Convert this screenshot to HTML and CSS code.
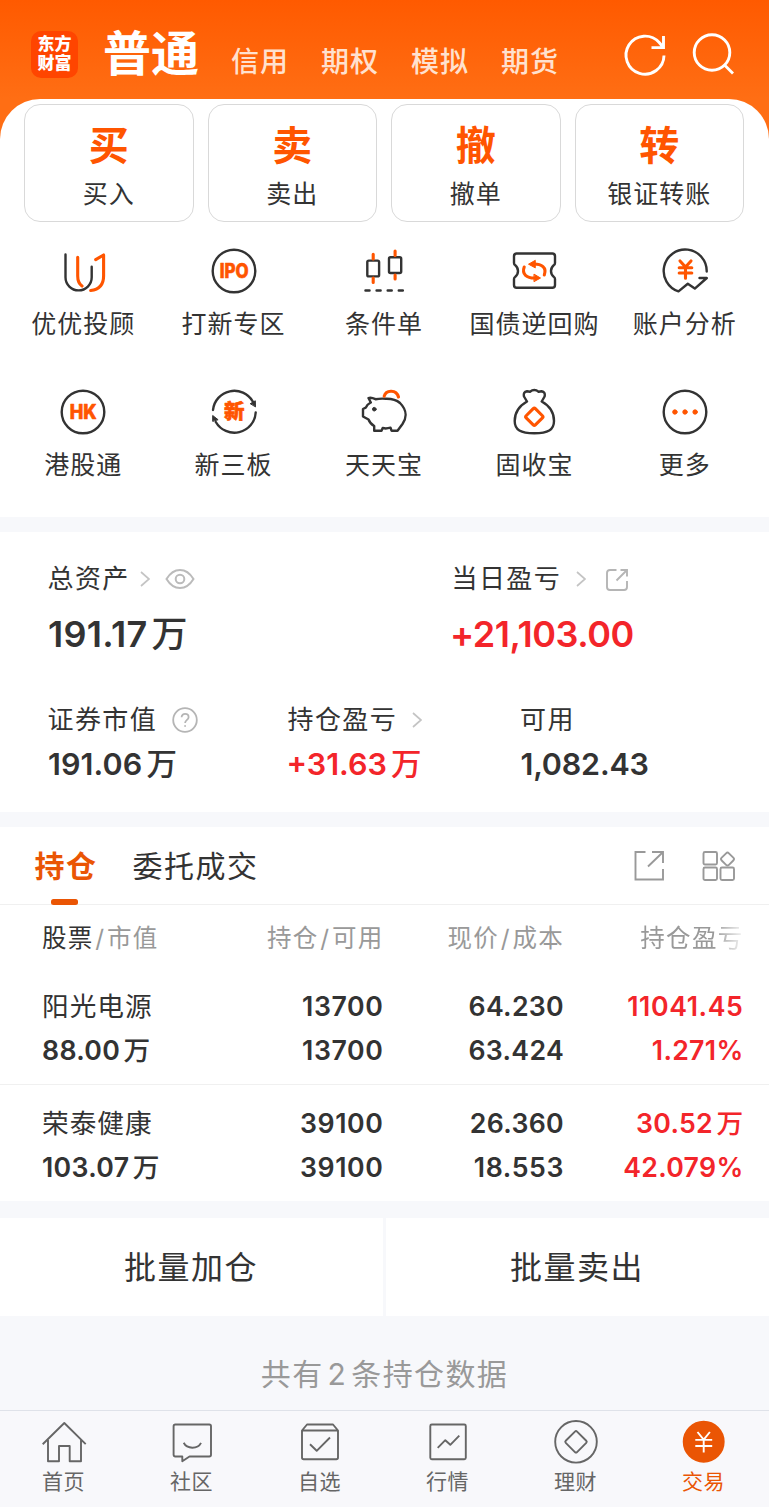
FILE: index.html
```html
<!DOCTYPE html>
<html lang="zh-CN">
<head>
<meta charset="utf-8">
<title>交易</title>
<link rel="stylesheet" href="styles.css">
</head>
<body>
<div class="app">
  <header class="top">
    <div class="logo"><span>东方</span><span>财富</span></div>
    <nav class="modes">
      <span class="mode mode-on">普通</span>
      <span class="mode">信用</span>
      <span class="mode">期权</span>
      <span class="mode">模拟</span>
      <span class="mode">期货</span>
    </nav>
    <svg class="top-icon" width="48" height="48" viewBox="0 0 48 48"><path d="M43 25.500A19 19 0 1 1 38.200 12.500L42 17M42.500 6V17.600H30.500"/></svg>
    <svg class="top-icon" width="48" height="48" viewBox="0 0 48 48"><circle cx="22" cy="22.500" r="17.800"/><path d="M34.500 35L43 43.500"/></svg>
  </header>

  <main class="sheet">
    <section class="cards">
      <div class="card"><b>买</b><span>买入</span></div>
      <div class="card"><b>卖</b><span>卖出</span></div>
      <div class="card"><b>撤</b><span>撤单</span></div>
      <div class="card"><b>转</b><span>银证转账</span></div>
    </section>

    <section class="tools">
      <div class="tool">
        <svg class="ico" viewBox="0 0 48 48"><path d="M6.500 7.500V30.300a13.100 13.100 0 0 0 26.200 0V19.700"/><path class="o3" d="M18.700 10.200V29Q18.700 36 23 39M36.700 12.700L44.600 8V29Q44.600 42 31.700 43.500"/></svg>
        <span>优优投顾</span>
      </div>
      <div class="tool">
        <svg class="ico" viewBox="0 0 48 48"><circle cx="24" cy="24" r="21.300"/><text x="24.200" y="31" font-size="19.500" textLength="29" lengthAdjust="spacingAndGlyphs">IPO</text></svg>
        <span>打新专区</span>
      </div>
      <div class="tool">
        <svg class="ico" viewBox="0 0 48 48"><rect x="7.300" y="13.600" width="11.800" height="15.800" rx="1.500"/><rect x="29" y="10.200" width="12.200" height="15.800" rx="1.500"/><path class="o3" d="M13.200 7.300V12M13.200 31V35.500M35.100 4V8.500M35.100 28V32"/><path class="dash" d="M5.500 43.500H44"/></svg>
        <span>条件单</span>
      </div>
      <div class="tool">
        <svg class="ico" viewBox="0 0 48 48"><path d="M6.300 6.500H42.300Q45 6.500 45 9.200V16Q45 17.500 43.700 18.300Q41 20.500 41 24T43.700 29.700Q45 30.500 45 32V38Q45 40.800 42.300 40.800H6.700Q4 40.800 4 38V32Q4 30.500 5.300 29.700Q8 27.500 8 24T5.300 18.300Q4 17.500 4 16V9.200Q4 6.500 6.700 6.500"/><path class="o3" d="M14.200 20C11.500 27.500 17 31 24.500 31M34.300 28C37 20.500 31.500 17 24 17"/><path class="of" d="M24.300 27.300L30.500 31L24.300 34.500ZM25 13.500L18.500 17.200L25 20.700Z"/></svg>
        <span>国债逆回购</span>
      </div>
      <div class="tool">
        <svg class="ico" viewBox="0 0 48 48"><path d="M45.700 24.500A21.500 21.500 0 1 0 17.500 44.400L26.800 36.800L33.800 41.600L45.800 31H38.500"/><path class="o3" d="M19 14L24.500 20L30 14M24.500 20V31.300M18.200 20.800H30.800M18.200 26H30.800"/></svg>
        <span>账户分析</span>
      </div>
      <div class="tool">
        <svg class="ico" viewBox="0 0 48 48"><circle cx="24" cy="24" r="21.300"/><text x="24.200" y="31" font-size="19.500" textLength="27" lengthAdjust="spacingAndGlyphs">HK</text></svg>
        <span>港股通</span>
      </div>
      <div class="tool">
        <svg class="ico" viewBox="0 0 48 48"><path d="M3 22A21.400 21.400 0 0 1 42.800 13.500M45.700 24.500A21.400 21.400 0 0 1 5.800 34"/><path class="df" d="M40.500 15.500L45.300 12.800L45.500 18.500ZM2.700 33V27.500L7.800 31.500Z"/><text x="24.300" y="31" font-size="20.500">新</text></svg>
        <span>新三板</span>
      </div>
      <div class="tool">
        <svg class="ico" viewBox="0 0 48 48"><path d="M26 10.700Q35 10.500 40 15C48 23 46 31 42.500 36L37.500 42.700H31.500L30.500 39.700Q26 41 22.700 40L21.500 42.700H14.200V38Q10 35.500 8.500 31.500L3 28.500V21L5.700 19.700Q7.500 16 10.800 14.500L8.500 10Q11 9 15.500 11.200Q20 10.300 26 10.700"/><circle class="df" cx="14.300" cy="21.200" r="1.800"/><path class="o3" d="M24.200 8.200C26 1.500 36.500 1.500 38.500 9"/></svg>
        <span>天天宝</span>
      </div>
      <div class="tool">
        <svg class="ico" viewBox="0 0 48 48"><path d="M17 13.500L14 8.500Q13 4 17 3.200L20 3.700Q24.300 .5 28.600 3.700L31.600 3.200Q35.600 4 34.600 8.500L31.700 13.500C40 18 44 25 44 33C44 42 38 45.200 24.300 45.200S4.700 42 4.700 33C4.700 25 9 18 17 13.500"/><rect class="o3" x="17.800" y="22.300" width="13" height="13" rx="1.500" transform="rotate(45 24.300 28.800)"/></svg>
        <span>固收宝</span>
      </div>
      <div class="tool">
        <svg class="ico" viewBox="0 0 48 48"><circle cx="24" cy="24" r="21.300"/><g class="of"><circle cx="13.900" cy="24" r="2.200"/><circle cx="24" cy="24" r="2.200"/><circle cx="34.100" cy="24" r="2.200"/></g></svg>
        <span>更多</span>
      </div>
    </section>

    <section class="assets">
      <div class="asset-row asset-main">
        <div class="asset">
          <div class="label"><span>总资产</span><svg class="chev" viewBox="0 0 10 16"><path d="M1 1L9 8L1 15"/></svg><svg class="eye" viewBox="0 0 30 22"><path d="M1.500 11Q7 2 15 2T28.500 11Q23 20 15 20T1.500 11Z"/><circle cx="15" cy="11" r="4.300"/></svg></div>
          <div class="value wide">191.17<i>万</i></div>
        </div>
        <div class="asset">
          <div class="label"><span>当日盈亏</span><svg class="chev chev-wide" viewBox="0 0 10 16"><path d="M1 1L9 8L1 15"/></svg><svg class="share-s" viewBox="0 0 24 24"><path d="M11.500 2H5Q2 2 2 5V19Q2 22 5 22H19Q22 22 22 19V13M11.500 12.500L21.500 2.500M15.500 2H22V8.500"/></svg></div>
          <div class="value red signed">+21,103.00</div>
        </div>
      </div>
      <div class="asset-row asset-sub">
        <div class="asset">
          <div class="label"><span>证券市值</span><svg class="help" viewBox="0 0 26 26"><circle cx="13" cy="13" r="11.800"/><path d="M9.600 10.300C9.600 5.700 16.600 5.900 16.600 10.200C16.600 12.800 13.100 13 13.100 16M13.100 18.200V19.800"/></svg></div>
          <div class="value">191.06<i>万</i></div>
        </div>
        <div class="asset">
          <div class="label"><span>持仓盈亏</span><svg class="chev chev-wide" viewBox="0 0 10 16"><path d="M1 1L9 8L1 15"/></svg></div>
          <div class="value red signed">+31.63<i>万</i></div>
        </div>
        <div class="asset">
          <div class="label"><span>可用</span></div>
          <div class="value snug">1,082.43</div>
        </div>
      </div>
    </section>

    <section class="holdings">
      <div class="tabs">
        <span class="tab tab-on">持仓</span>
        <span class="tab">委托成交</span>
        <svg class="tab-ico" width="32" height="32" viewBox="0 0 32 32"><path d="M12.500 2H2.500V29.500H30V19M15 16.500L29.500 2.500M19 2H30V13"/></svg>
        <svg class="tab-ico" width="34" height="32" viewBox="0 0 34 32"><rect x="1.500" y="2" width="13.500" height="12.500" rx="1.500"/><rect x="1.500" y="17.500" width="13.500" height="12.500" rx="1.500"/><rect x="18.500" y="17.500" width="13.500" height="12.500" rx="1.500"/><rect x="20.400" y="4" width="10.200" height="10.200" rx="2" transform="rotate(45 25.500 9.100)"/></svg>
      </div>
      <div class="row head">
        <span><em>股票</em><u>/</u>市值</span><span>持仓<u>/</u>可用</span><span>现价<u>/</u>成本</span><span class="fade">持仓盈亏</span>
      </div>
      <div class="row stock">
        <div class="cell"><span class="name">阳光电源</span><span>88.00<i>万</i></span></div>
        <div class="cell"><span class="loose">13700</span><span class="loose">13700</span></div>
        <div class="cell"><span>64.230</span><span>63.424</span></div>
        <div class="cell red"><span class="loose">11041.45</span><span>1.271%</span></div>
      </div>
      <div class="row stock">
        <div class="cell"><span class="name">荣泰健康</span><span>103.07<i>万</i></span></div>
        <div class="cell"><span class="loose">39100</span><span class="loose">39100</span></div>
        <div class="cell"><span>26.360</span><span class="loose">18.553</span></div>
        <div class="cell red"><span>30.52<i>万</i></span><span>42.079%</span></div>
      </div>
    </section>

    <section class="batch">
      <div>批量加仓</div>
      <div>批量卖出</div>
    </section>
    <p class="summary">共有<span>2</span>条持仓数据</p>
  </main>

  <footer class="nav">
    <div><svg viewBox="0 0 48 48"><path d="M2.700 26.200L24.300 5L45.700 26.200M8 22V43.200H19V28H29.700V43.200H41V22"/></svg><span>首页</span></div>
    <div><svg viewBox="0 0 48 48"><path d="M7.300 6.500H41.300Q43 6.500 43 8.200V36.800Q43 38.500 41.300 38.500H21.500L14.300 43.300V38.500H7.300Q5.600 38.500 5.600 36.800V8.200Q5.600 6.500 7.300 6.500ZM15.700 24.800C19 31.300 29.800 31.300 33 24.800"/></svg><span>社区</span></div>
    <div><svg viewBox="0 0 48 48"><path d="M6 12.500L11 6.500H37L42 12.500V39.500Q42 41.200 40.300 41.200H7.700Q6 41.200 6 39.500ZM6 12.500H42M14 26.200L20.700 32.800L34 19.500"/></svg><span>自选</span></div>
    <div><svg viewBox="0 0 48 48"><rect x="6.300" y="6.500" width="35.500" height="34.700" rx="1.500"/><path d="M13.700 29.800L21.300 22.200L26.300 26.800L35.300 17.700"/></svg><span>行情</span></div>
    <div><svg viewBox="0 0 48 48"><circle cx="24" cy="23.800" r="20.800"/><rect x="16" y="15.800" width="16" height="16" rx="1.500" transform="rotate(45 24 23.800)"/></svg><span>理财</span></div>
    <div class="nav-on"><svg viewBox="0 0 48 48"><circle cx="23.700" cy="23.800" r="20"/><path d="M17.500 14L23.700 21.700L29.900 14M23.700 21.700V34.500M15.300 21.900H32.200M15.300 28H32.200"/></svg><span>交易</span></div>
  </footer>
</div>
</body>
</html>
```
FILE: styles.css
```css
* { box-sizing: border-box; }
body {
  margin: 0;
  background: #f7f8fb;
  color: #333;
  font-family: Inter, "Noto Sans CJK SC", sans-serif;
}
i, em { font-style: normal; }
u { text-decoration: none; margin: 0 1.600px; }
svg { display: block; flex: none; fill: none; }
.app { width: 769px; height: 1507px; display: flex; flex-direction: column; overflow: hidden; background: linear-gradient(#ff5a00 0, #ff6e14 99px, #ff6e14 150px, #f7f8fb 150px); }

.top { height: 99px; display: flex; align-items: flex-start; padding: 30px 0 0 31px; color: #fff; flex: none; }
.logo { width: 47px; height: 47px; margin-top: 1px; border-radius: 10px; background: #ff4500; display: flex; flex-direction: column; align-items: center; padding-top: 4px; font-size: 17px; font-weight: 900; line-height: 19px; }
.modes { display: flex; align-items: flex-start; margin-left: 25px; width: 518px; }
.mode { font-size: 28px; letter-spacing: 1px; line-height: 40px; margin: 12px 0 0 32px; font-weight: 500; color: #ffe1cf; }
.mode-on { font-size: 48px; line-height: 48px; letter-spacing: 0; margin: 0; font-weight: 700; color: #fff; }
.top-icon { stroke: #fff; stroke-width: 2.900; margin-right: 21px; }

.sheet { flex: 1; }
.cards { background: #fff; border-radius: 40px 40px 0 0; padding: 5px 25px 0 24px; display: grid; grid-template-columns: repeat(4, 1fr); gap: 14px; }
.card { height: 118px; border: 1.500px solid #d9d9d9; border-radius: 16px; display: flex; flex-direction: column; align-items: center; padding-top: 18px; }
.card b { font-size: 40px; line-height: 46px; color: #ff5500; font-weight: 700; }
.card span { font-size: 25px; letter-spacing: 1px; line-height: 30px; margin-top: 10px; }

.tools { background: #fff; height: 295px; padding: 24.500px 9px 0 8px; display: grid; grid-template-columns: repeat(5, 1fr); grid-auto-rows: 141px; }
.tool { display: flex; flex-direction: column; align-items: center; }
.tool span { font-size: 25px; letter-spacing: 1px; line-height: 30px; margin-top: 14.500px; white-space: nowrap; }
.ico { width: 48px; height: 48px; stroke: #333; stroke-width: 2.400; stroke-linecap: round; stroke-linejoin: round; }
.ico text { fill: #ff5500; stroke: #ff5500; stroke-width: .6; font-weight: 800; text-anchor: middle; }
.ico .o3 { stroke: #ff5500; stroke-width: 3.100; }
.ico .of { fill: #ff5500; stroke: #ff5500; stroke-width: 1; }
.ico .df { fill: #333; stroke-width: 1; }
.ico .dash { stroke-dasharray: 4 7.100; stroke-width: 2.500; }

.assets { background: #fff; margin-top: 15px; height: 280px; padding: 29px 0 0 48px; }
.asset-row { display: grid; }
.asset-main { grid-template-columns: 404px 1fr; height: 141px; }
.asset-sub { grid-template-columns: 240px 232.500px 1fr; }
.label { height: 36px; display: flex; align-items: center; font-size: 26px; letter-spacing: 1.400px; }
.label span { line-height: 32px; margin-left: -.5px; }
.value { font-size: 36px; font-weight: 600; line-height: 44px; margin-top: 15px; }
.value.wide { letter-spacing: .3px; }
.asset-sub .value { font-size: 30.500px; line-height: 40px; margin-top: 6px; letter-spacing: .1px; }
.value i { margin-left: 4px; font-weight: 500; }
.cell i { margin-left: 3.500px; font-weight: 500; }
.value.signed { margin-left: -2px; letter-spacing: -.45px; }
.asset-sub .value.signed { margin-left: -1.500px; letter-spacing: 0; }
.asset-sub .value.snug { letter-spacing: -.2px; }
.red { color: #f3252a; }
.chev { width: 10px; height: 16px; stroke: #c4c4c4; stroke-width: 1.700; margin-left: 10px; }
.chev-wide { margin-left: 15px; }
.eye { width: 30px; height: 22px; stroke: #bbb; stroke-width: 2; margin-left: 15px; }
.share-s { width: 24px; height: 24px; stroke: #b5b5b5; stroke-width: 1.900; margin: 2px 0 0 19px; }
.help { width: 26px; height: 26px; stroke: #b5b5b5; stroke-width: 1.800; margin-left: 15px; }

.holdings { background: #fff; margin-top: 15px; }
.tabs { height: 78px; display: flex; align-items: flex-start; padding: 19px 33px 0 34.500px; border-bottom: 1px solid #f0f0f0; }
.tab { font-size: 30px; letter-spacing: 1.500px; line-height: 41px; margin-right: auto; }
.tab-on { color: #ea5504; font-weight: 700; margin-right: 35px; display: flex; flex-direction: column; align-items: center; }
.tab-on::after { content: ""; width: 27px; height: 6px; border-radius: 2.500px; background: #ea5504; margin: 12px 3px 0 0; }
.tab-ico { stroke: #999; stroke-width: 1.900; margin: 4px 0 0 37px; }
.row { display: grid; grid-template-columns: 160px 181.500px 180.500px 179.500px; padding-left: 42px; }
.head { height: 63px; padding-bottom: 1px; align-items: center; color: #999; font-size: 24.500px; letter-spacing: 1.300px; }
.head em { color: #333; }
.head span, .cell { text-align: right; white-space: nowrap; }
.head span:first-child, .cell:first-child { text-align: left; }
.head .fade { -webkit-mask-image: linear-gradient(90deg, #000 150px, rgba(0,0,0,.1) 179px); mask-image: linear-gradient(90deg, #000 150px, rgba(0,0,0,.1) 179px); }
.stock { height: 117px; padding-top: 16px; border-bottom: 1px solid #f0f0f0; font-size: 26.700px; font-weight: 600; letter-spacing: .3px; }
.stock:last-child { border-bottom: 0; height: 116px; }
.cell { display: flex; flex-direction: column; }
.cell span { line-height: 44px; }
.cell .loose { letter-spacing: .6px; }
.cell .name { font-weight: 400; letter-spacing: 1px; }

.batch { display: grid; grid-template-columns: 1fr 1fr; gap: 3px; margin-top: 17px; }
.batch div { background: #fff; height: 98px; line-height: 100px; text-align: center; font-size: 32px; letter-spacing: 1.500px; padding-right: 1px; }
.summary { margin: 38px 0 0; text-align: center; color: #999; font-size: 30px; letter-spacing: 1.400px; line-height: 40px; }
.summary span { margin: 0 4px; }

.nav { flex: none; height: 97px; border-top: 1px solid #dfe2e9; background: #f8f8fb; display: grid; grid-template-columns: repeat(6, 1fr); padding: 6.500px 1px 0 0; }
.nav div { display: flex; flex-direction: column; align-items: center; color: #666; }
.nav svg { width: 48px; height: 48px; stroke: #666; stroke-width: 1.900; stroke-linejoin: round; }
.nav span { font-size: 21px; letter-spacing: .5px; line-height: 28px; margin: 2.500px 1px 0 0; }
.nav .nav-on { color: #ea5504; }
.nav-on circle { fill: #ea5504; stroke: #ea5504; }
.nav-on path { stroke: #fff; }
```
